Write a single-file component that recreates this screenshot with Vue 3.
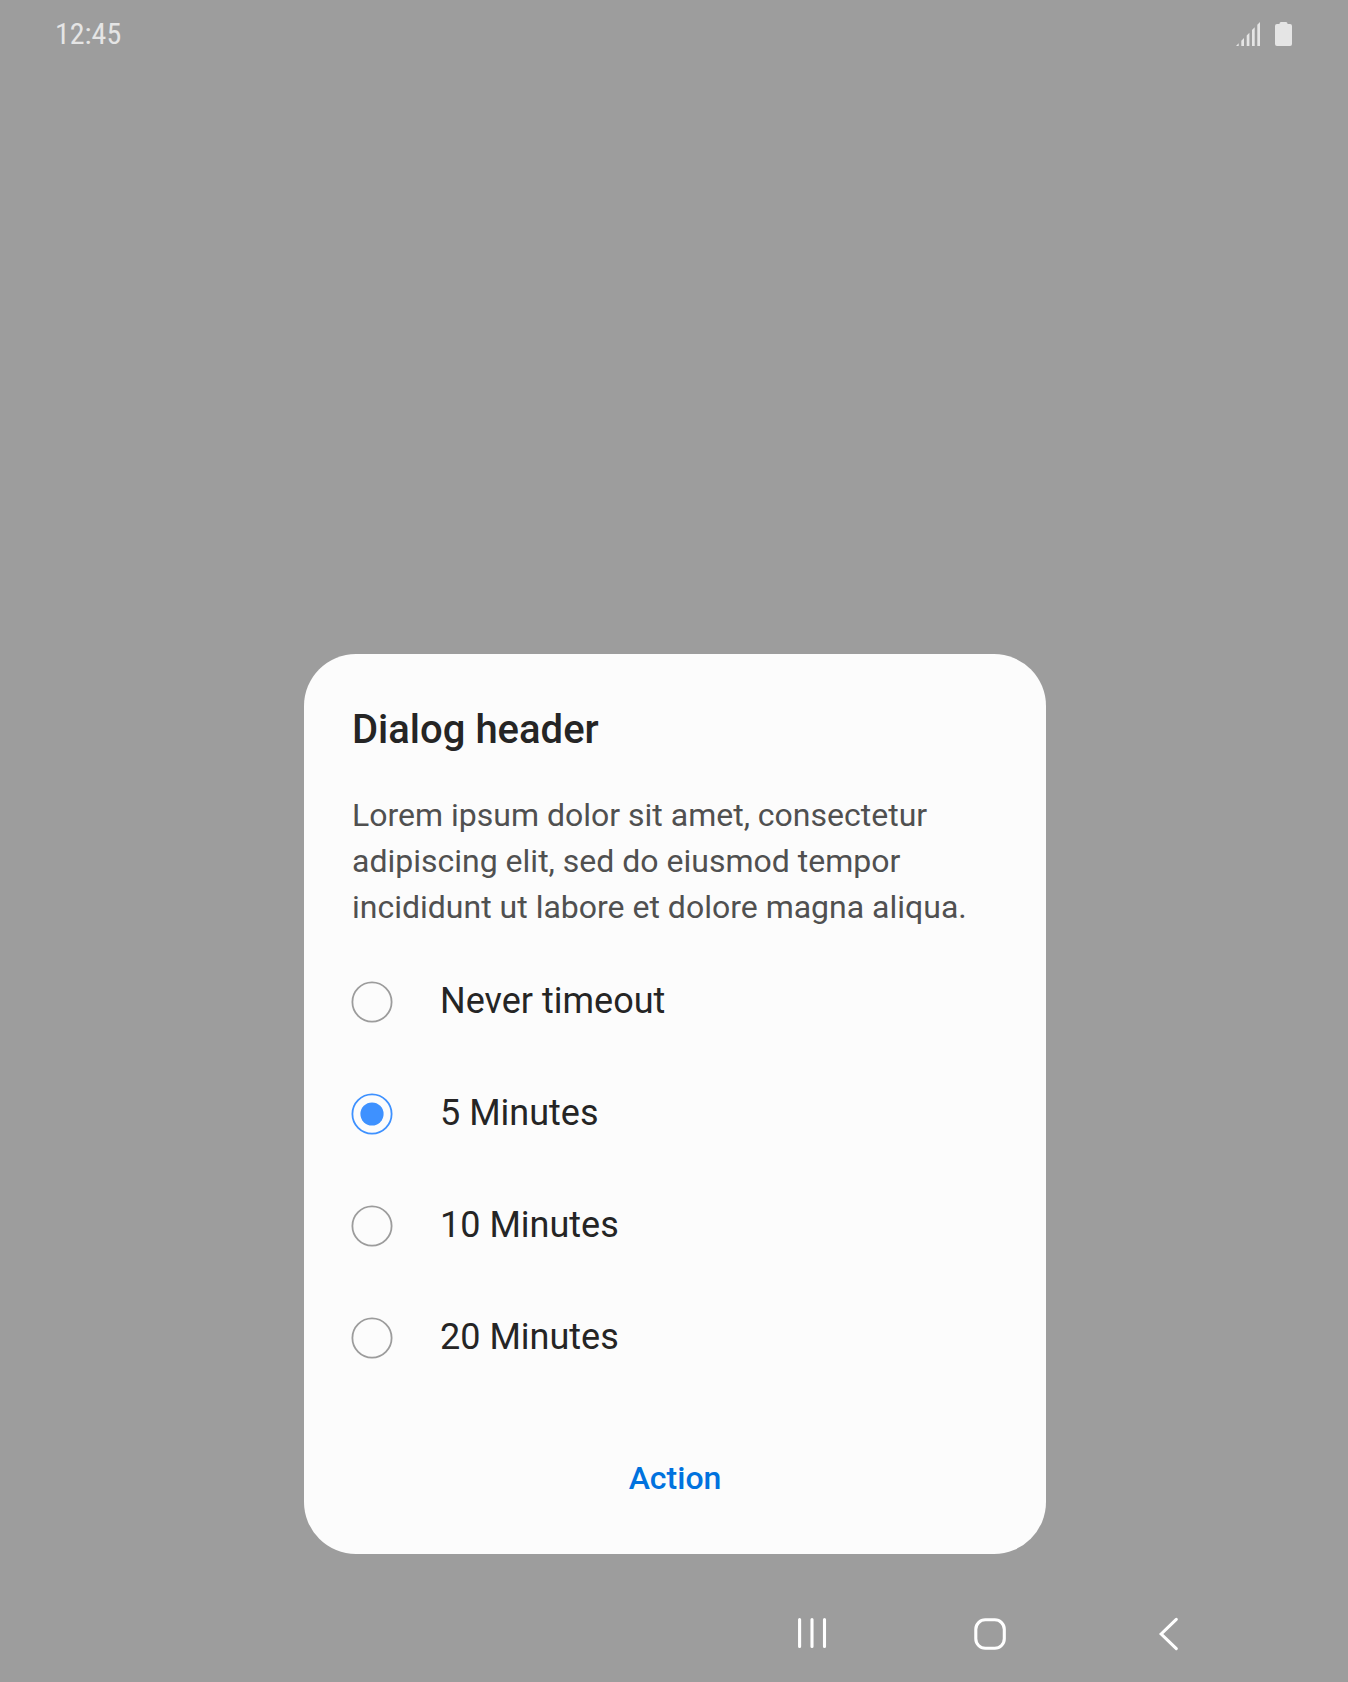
<script setup>
import { ref } from 'vue'

const options = ['Never timeout', '5 Minutes', '10 Minutes', '20 Minutes']
const selected = ref('5 Minutes')
</script>

<template>
  <div class="screen">
    <header class="status-bar">
      <span class="clock">12:45</span>
      <div class="status-icons">
        <svg width="25" height="25" viewBox="0 0 25 25" fill="currentColor">
          <path d="M0 25L2.7 22.3V25ZM5.3 25V19.7L8 17V25ZM10.7 25V14.4L13.4 11.7V25ZM16 25V9L18.7 6.3V25ZM21.3 25V3.7L24 1V25Z" />
        </svg>
        <svg width="17" height="25" viewBox="0 0 17 25" fill="currentColor">
          <path d="M4.5 3V2.5Q4.5 1 6 1H11Q12.5 1 12.5 2.5V3H15Q17 3 17 5V23Q17 25 15 25H2Q0 25 0 23V5Q0 3 2 3Z" />
        </svg>
      </div>
    </header>

    <main class="stage">
      <section class="dialog" role="dialog">
        <h1 class="title">Dialog header</h1>
        <p class="body">
          Lorem ipsum dolor sit amet, consectetur<br />adipiscing elit, sed do eiusmod tempor<br />incididunt ut labore et dolore magna aliqua.
        </p>
        <ul class="options">
          <li v-for="o in options" :key="o" class="option" @click="selected = o">
            <svg class="radio" :class="{ on: o === selected }" width="42" height="42" viewBox="0 0 42 42">
              <circle class="ring" cx="21" cy="21" r="19.6" />
              <circle v-if="o === selected" class="dot" cx="21" cy="21" r="11.6" />
            </svg>
            <span class="label">{{ o }}</span>
          </li>
        </ul>
        <button class="action">Action</button>
      </section>
    </main>

    <nav class="nav-bar">
      <svg width="36" height="36" viewBox="0 0 36 36">
        <path d="M5.6 3.5V30.5M18 3.5V30.5M30.5 3.5V30.5" />
      </svg>
      <svg width="36" height="36" viewBox="0 0 36 36">
        <rect x="3.8" y="3.8" width="28.5" height="28.5" rx="9.5" />
      </svg>
      <svg width="36" height="36" viewBox="0 0 36 36">
        <path d="M26.3 3.4L11.2 18L26.3 32.6" />
      </svg>
    </nav>
  </div>
</template>

<style>
body {
  margin: 0;
}
</style>

<style scoped>
.screen {
  display: flex;
  flex-direction: column;
  box-sizing: border-box;
  width: 1348px;
  height: 1682px;
  background: #9d9d9d;
  font-family: Roboto, "Liberation Sans", sans-serif;
  color: #252525;
}
.status-bar {
  display: flex;
  justify-content: space-between;
  align-items: center;
  height: 68px;
  padding: 0 56px 0 55px;
  color: #e5e5e5;
}
.clock {
  font-family: "Roboto Condensed", Roboto, sans-serif;
  font-stretch: 75%;
  font-size: 30px;
  line-height: 36px;
}
.status-icons {
  display: flex;
  gap: 14px;
  padding-bottom: 2px;
}
.stage {
  flex: 1;
  display: flex;
  flex-direction: column;
  justify-content: flex-end;
  padding-left: 304px;
}
.dialog {
  display: flex;
  flex-direction: column;
  box-sizing: border-box;
  width: 742px;
  height: 900px;
  padding: 52px 48px 0;
  border-radius: 52px;
  background: #fcfcfc;
}
.title {
  margin: 0 0 38px;
  font-size: 40px;
  line-height: 48px;
  font-weight: 500;
}
.body {
  margin: 0 0 16px;
  font-size: 32px;
  line-height: 46px;
  color: #505050;
  white-space: nowrap;
}
.options {
  margin: 0;
  padding: 0;
  list-style: none;
}
.option {
  display: flex;
  align-items: center;
  gap: 47px;
  height: 112px;
  margin-left: -1px;
}
.radio {
  fill: none;
  stroke: #9c9c9c;
  stroke-width: 1.8;
}
.radio.on {
  stroke: #3e91ff;
}
.dot {
  fill: #3e91ff;
  stroke: none;
}
.label {
  font-size: 36px;
  line-height: 42px;
  padding-bottom: 3px;
}
.action {
  align-self: center;
  margin-top: 64px;
  padding: 0;
  border: 0;
  background: none;
  font: 500 32px/40px Roboto, sans-serif;
  color: #0072de;
}
.nav-bar {
  display: flex;
  gap: 142px;
  height: 66px;
  margin-top: 0;
  padding: 62px 0 0 794px;
  fill: none;
  stroke: #fff;
  stroke-width: 3.1;
  stroke-linecap: round;
  stroke-linejoin: miter;
}
</style>
